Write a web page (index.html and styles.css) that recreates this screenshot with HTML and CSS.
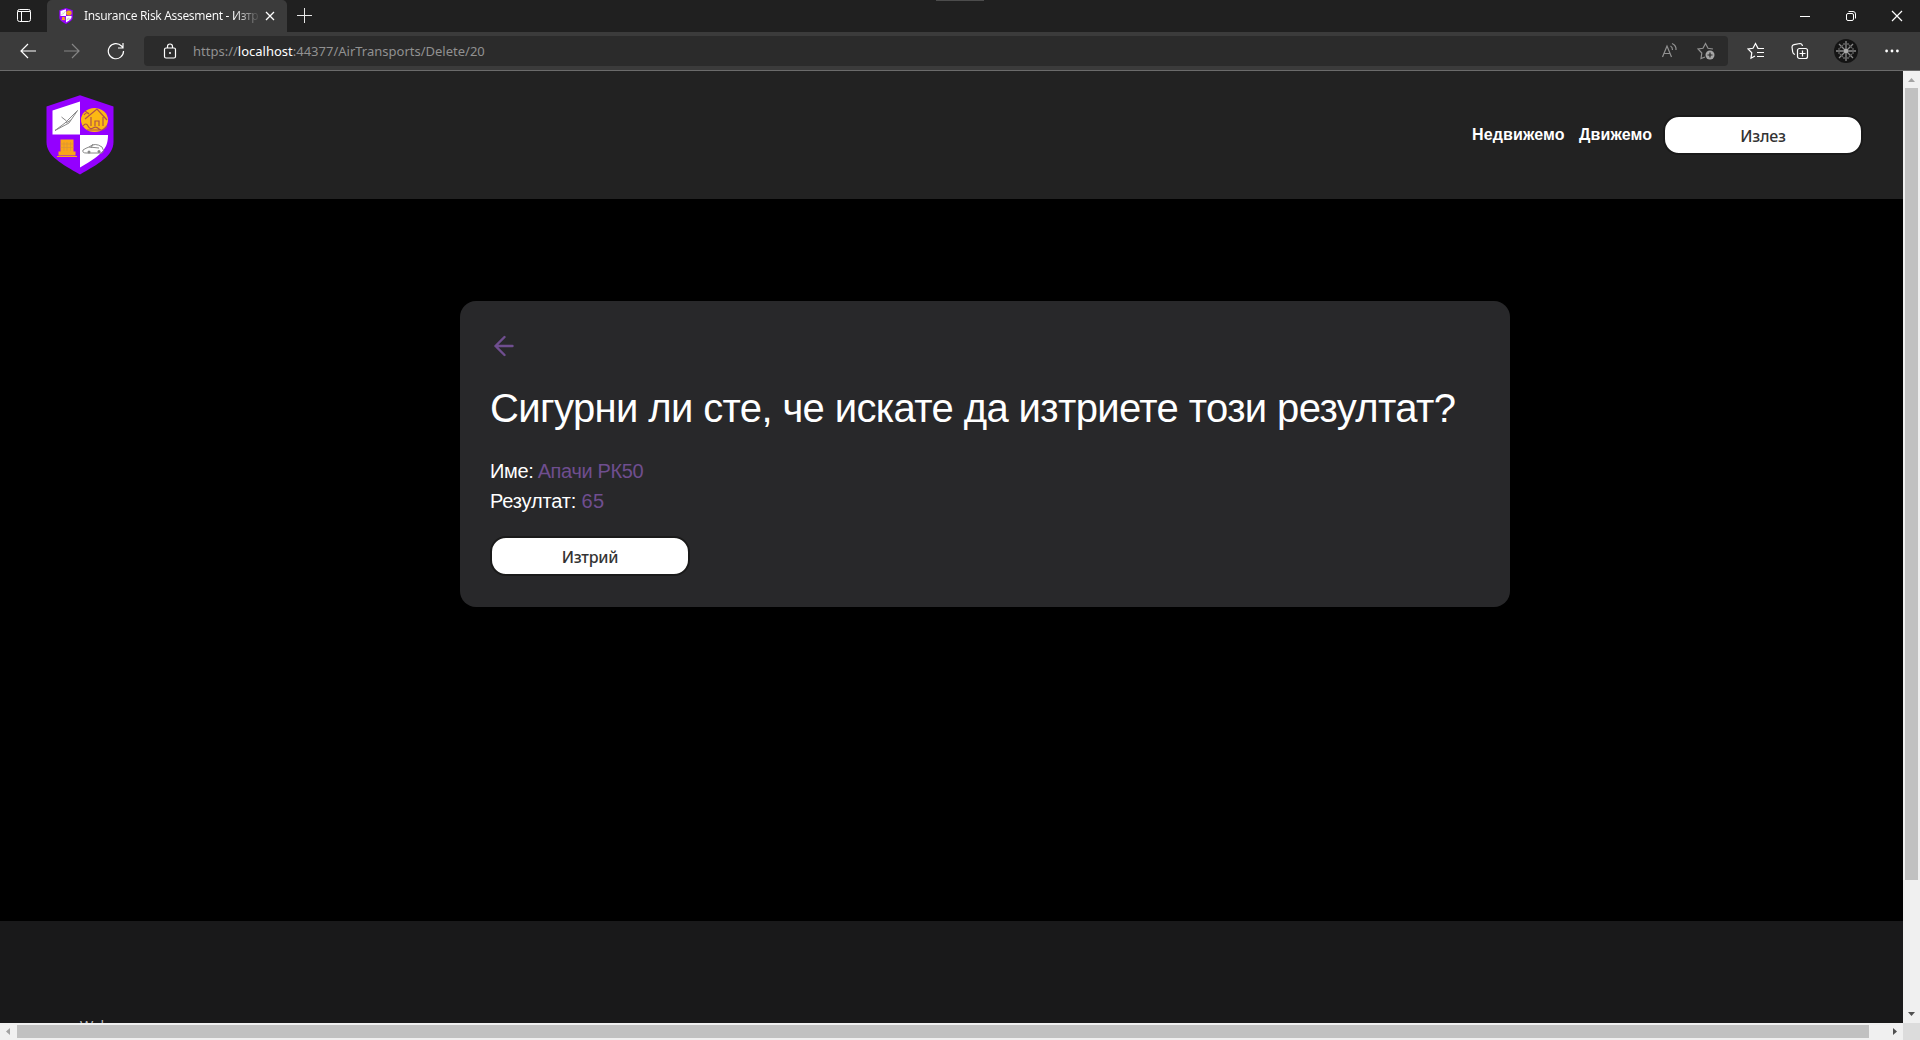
FILE: index.html
```html
<!DOCTYPE html>
<html lang="bg">
<head>
<meta charset="utf-8">
<title>Insurance Risk Assesment - Изтриване</title>
<link rel="stylesheet" href="styles.css">
</head>
<body>
<svg width="0" height="0" class="defs">
  <symbol id="shield" viewBox="0 0 68 80">
    <path d="M34 .3 67.500 11.500V47C67.500 61 52 69 34 79.500 16 69 .5 61 .5 47V11.500Z" fill="#9400ff"/>
    <path d="M34 6.500V39.500H6.500V15.500ZM34 40H62C62 52 58 59 34 72.500Z" fill="#fff"/>
    <ellipse cx="48.500" cy="25" rx="13.500" ry="12" fill="#fdb913"/>
    <g fill="none" stroke="#b0544a" stroke-width="1.200">
      <path d="M39 24 51 14 61 25M45 22v9M57 22v9M49 31v-5h4v5M37 31q3-4 5 0t5 2 6 1 8-3M38 20q3-4 5-1l-4-3M41 35h14"/>
    </g>
    <path d="M14.500 44.500h13v12h2v4H12.500v-4h2Z" fill="#f9a61a"/>
    <path d="M11 61.500h20" stroke="#f9a61a"/>
    <path d="M18 47v9M21 47v9M24.500 47v9M14.500 49h13M14.500 52.500h13" stroke="#d8933a" stroke-width=".7"/>
    <path d="M9 35.500 19 28 31.500 15.500 23 28 9 35.500M15.500 22l5 4M20 28l5-3" stroke="#888" fill="none"/>
    <path d="M37 55q3-2 6-3 6-5 13 0 3 4 0 6H40Q36 58 37 55ZM43 52l10 1M47 49l-2 4" stroke="#888" fill="none"/>
    <circle cx="43" cy="57" r="1.500" fill="#888"/><circle cx="53" cy="56.500" r="1.500" fill="#888"/>
  </symbol>
</svg>
<div class="browser">
  <div class="tabs">
    <svg class="tab-actions" width="16" height="16" viewBox="0 0 16 16" fill="none" stroke="#fff"><rect x="1.500" y="1.500" width="13" height="12" rx="2"/><path d="M2 3.500h12M5.500 4v9" /></svg>
    <div class="tab">
      <svg class="favicon" width="16" height="16"><use href="#shield"/></svg>
      <span class="tab-title">Insurance Risk Assesment - Изтр</span>
      <svg class="tab-close" width="10" height="10" viewBox="0 0 10 10" stroke="#fff" stroke-width="1.300"><path d="m1 1 8 8M9 1 1 9"/></svg>
    </div>
    <svg class="new-tab" width="15" height="15" viewBox="0 0 15 15" stroke="#e8e8e8"><path d="M7.500 0v15M0 7.500h15"/></svg>
    <div class="drag-mark"></div>
    <div class="window-buttons">
      <svg width="12" height="12" viewBox="0 0 12 12" stroke="#fff"><path d="M1 6.500h10"/></svg>
      <svg width="12" height="12" viewBox="0 0 12 12" fill="none" stroke="#fff"><rect x="1.500" y="3.500" width="7" height="7" rx="1.500"/><path d="M3.500 1.500H8Q10.500 1.500 10.500 4v4.500"/></svg>
      <svg width="12" height="12" viewBox="0 0 12 12" stroke="#fff" stroke-width="1.200"><path d="m1 1 10 10M11 1 1 11"/></svg>
    </div>
  </div>
  <div class="toolbar">
    <svg class="back" width="18" height="16" viewBox="0 0 18 16" fill="none" stroke="#fff" stroke-width="1.200"><path d="M17 8H2M9 1 2 8l7 7"/></svg>
    <svg class="forward" width="18" height="16" viewBox="0 0 18 16" fill="none" stroke="#858585" stroke-width="1.200"><path d="M1 8h15M9 1l7 7-7 7"/></svg>
    <svg class="reload" width="18" height="18" viewBox="0 0 18 18" fill="none" stroke="#fff" stroke-width="1.200"><path d="M16.500 9A7.600 7.600 0 1 1 14.500 4L16 6M16 1v5h-5"/></svg>
    <div class="address">
      <svg width="14" height="18" viewBox="0 0 14 18" fill="none" stroke="#fff" stroke-width="1.200"><rect x="1.500" y="6" width="11" height="10" rx="1.500"/><path d="M4.500 6V4.500a2.500 2.500 0 0 1 5 0V6"/><circle cx="7" cy="11" r=".7" fill="#fff" stroke-width=".7"/></svg>
      <span class="url">https://<b>localhost</b>:44377/AirTransports/Delete/20</span>
      <svg class="read" width="18" height="18" viewBox="0 0 18 18" fill="none" stroke="#919191" stroke-width="1.200"><path d="M1.500 15 6 4l4.500 11M3.200 11.500h5.600M9.500 4q2 1 2 4M11 1.500q4.500 2 4 6.500"/></svg>
      <svg class="fav-add" width="18" height="18" viewBox="0 0 18 18" fill="none" stroke="#919191" stroke-width="1.200"><path d="M8 15 4 16.500l.8-5.500L1 7l5-.7 2.500-4.800L11 6.300l5 .7"/><circle cx="13" cy="13" r="4.500" fill="#a6a6a6" stroke="none"/><path d="M13 10.500v5M10.500 13h5" stroke="#292929"/></svg>
    </div>
    <svg class="favorites" width="18" height="18" viewBox="0 0 18 18" fill="none" stroke="#fff" stroke-width="1.200"><path d="M8 14 4 16.200l.8-5.500L1 7l5-.7 2.500-4.800L11 6.300l6 .2M10 10.500h7M10 14.500h7"/></svg>
    <svg class="collections" width="18" height="18" viewBox="0 0 18 18" fill="none" stroke="#fff" stroke-width="1.200"><rect x="6.500" y="6.500" width="10" height="10" rx="2"/><path d="M11.500 8.500v6M8.500 11.500h6M4 12.500Q2 12 1.700 10L1 5Q1 3 3 2.600L9 1.500q2 0 2.500 2.500"/></svg>
    <svg class="profile" width="24" height="24" viewBox="0 0 24 24" fill="none" stroke="#8a8a8a" stroke-width="1.300"><circle cx="12" cy="12" r="12" fill="#141414" stroke="none"/><path d="M12 2v20M2 12h20M5 5l14 14M19 5 5 19"/><path d="M9 5h6M9 19h6M5 9v6M19 9v6M6 9l3-3M15 6l3 3M6 15l3 3M15 18l3-3" stroke="#606060"/><circle cx="12" cy="12" r="2.200" fill="#aaa" stroke="none"/></svg>
    <svg class="more" width="14" height="4" viewBox="0 0 14 4" fill="#fff"><circle cx="1.600" cy="2" r="1.400"/><circle cx="7" cy="2" r="1.400"/><circle cx="12.400" cy="2" r="1.400"/></svg>
  </div>
</div>
<div class="viewport">
  <div class="page">
    <header class="navbar">
      <svg class="logo" width="68" height="80"><use href="#shield"/></svg>
      <nav class="links">
        <a class="link-fixed">Недвижемо</a>
        <a class="link-movable">Движемо</a>
        <button class="button">Излез</button>
      </nav>
    </header>
    <main class="content">
      <section class="card">
        <svg class="card-back" width="20" height="22" viewBox="0 0 20 22" fill="none" stroke="#6f4e8f" stroke-width="2.400" stroke-linecap="round" stroke-linejoin="round"><path d="M18.500 11H1.500M10.500 2 1.500 11l9 9"/></svg>
        <h1>Сигурни ли сте, че искате да изтриете този резултат?</h1>
        <p class="name">Име: <em>Апачи РК50</em></p>
        <p class="score">Резултат: <em>65</em></p>
        <button class="button">Изтрий</button>
      </section>
    </main>
    <footer class="footer">Web</footer>
  </div>
  <div class="vbar">
    <svg width="17" height="17" viewBox="0 0 17 17"><path d="M5 11h7L8.500 7Z" fill="#a3a3a3"/></svg>
    <div class="vthumb"></div>
    <svg width="17" height="17" viewBox="0 0 17 17"><path d="M5 6h7l-3.500 4Z" fill="#505050"/></svg>
  </div>
  <div class="hbar">
    <svg width="17" height="17" viewBox="0 0 17 17"><path d="M10 5v7L6 8.500Z" fill="#a3a3a3"/></svg>
    <div class="hthumb"></div>
    <svg width="17" height="17" viewBox="0 0 17 17"><path d="M7 5v7l4-3.500Z" fill="#505050"/></svg>
  </div>
  <div class="corner"></div>
</div>
</body>
</html>
```
FILE: styles.css
```css
* { box-sizing: border-box; }
body { margin: 0; width: 1920px; height: 1040px; overflow: hidden; background: #000; font-family: "Liberation Sans", Arial, sans-serif; display: flex; flex-direction: column; }
svg { display: block; flex: none; }
.defs { position: absolute; }
.browser { height: 71px; flex: none; background: #3b3b3b; border-bottom: 1px solid #6b6b6b; font-family: "Noto Sans", sans-serif; }
.tabs { height: 32px; background: #202020; display: flex; align-items: flex-start; }
.tab-actions { margin: 8px 15px 0 16px; }
.tab { width: 240px; height: 32px; background: #3b3b3b; border-radius: 5px 5px 0 0; display: flex; align-items: center; padding: 0 12px 0 11px; }
.tab-title { margin-left: 10px; width: 176px; font-size: 12px; line-height: 32px; height: 32px; white-space: nowrap; letter-spacing: -.32px; background: linear-gradient(90deg, #fff 86%, #3b3b3b 101%); background-clip: text; color: transparent; }
.tab-close { margin-left: 6px; }
.new-tab { margin: 8px 0 0 10px; }
.drag-mark { width: 37px; height: 1px; margin-left: 624px; background: #4c4c4c; width: 48px; }
.window-buttons { display: flex; gap: 34px; margin: 10px 17px 0 auto; }
.toolbar { height: 38px; display: flex; align-items: center; }
.back { margin-left: 19px; }
.forward { margin-left: 26px; }
.reload { margin-left: 26px; }
.address { margin-left: 19px; width: 1584px; height: 30px; background: #2b2b2b; border-radius: 4px; display: flex; align-items: center; padding-left: 19px; }
.url { margin-left: 16px; font-size: 13px; line-height: 30px; color: #919191; white-space: nowrap; }
.url b { font-weight: 400; color: #fff; }
.read { margin-left: auto; }
.fav-add { margin: 0 13px 0 18px; }
.favorites { margin-left: 19px; }
.collections { margin-left: 26px; }
.profile { margin-left: 25px; }
.more { margin-left: 27px; }
.viewport { height: 969px; display: grid; grid-template: 952px 17px / 1903px 17px; }
.page { display: flex; flex-direction: column; overflow: hidden; }
.navbar { height: 128px; flex: none; background: #222; display: flex; align-items: flex-start; justify-content: space-between; padding: 24px 40px 0 46px; }
.links { display: flex; align-items: center; padding-top: 20px; color: #fff; font-weight: 700; font-size: 16px; letter-spacing: .12px; }
.link-fixed { width: 107px; }
.link-movable { width: 84px; }
.button { width: 200px; height: 40px; padding: 2px 0 0; background: #fff; border: 2px solid #1a1a1a; border-radius: 16px; font: 500 16px "Noto Sans", sans-serif; letter-spacing: -.2px; color: #333; }
.content { height: 722px; flex: none; padding: 102px 0 0 460px; }
.card { width: 1050px; height: 306px; border-radius: 16px; background: #28282a; padding: 34px 30px 0; color: #fff; }
.card-back { margin-left: 4px; }
h1 { margin: 27px 0 0; font-size: 40px; line-height: 48px; font-weight: 400; white-space: nowrap; letter-spacing: -.62px; }
p { margin: 0; font-size: 20px; line-height: 30px; }
.name { margin-top: 24px; letter-spacing: -.35px; }
.name em { margin-left: -1px; }
.score { letter-spacing: -.18px; }
.card .button { margin-top: 20px; display: block; }
em { font-style: normal; color: #6f4e8f; }
.score em { letter-spacing: .5px; }
.footer { height: 102px; flex: none; background: #19191a; color: #bbb; font-size: 14px; line-height: 18px; padding: 96px 0 0 80px; overflow: hidden; }
.vbar { background: #f0f0f0; display: flex; flex-direction: column; align-items: center; }
.vthumb { width: 13px; height: 792px; background: #c1c1c1; margin-bottom: auto; }
.hbar { background: #f0f0f0; display: flex; align-items: center; }
.hthumb { width: 1852px; height: 13px; background: #c1c1c1; margin-right: auto; }
.corner { background: #dcdcdc; }
```
